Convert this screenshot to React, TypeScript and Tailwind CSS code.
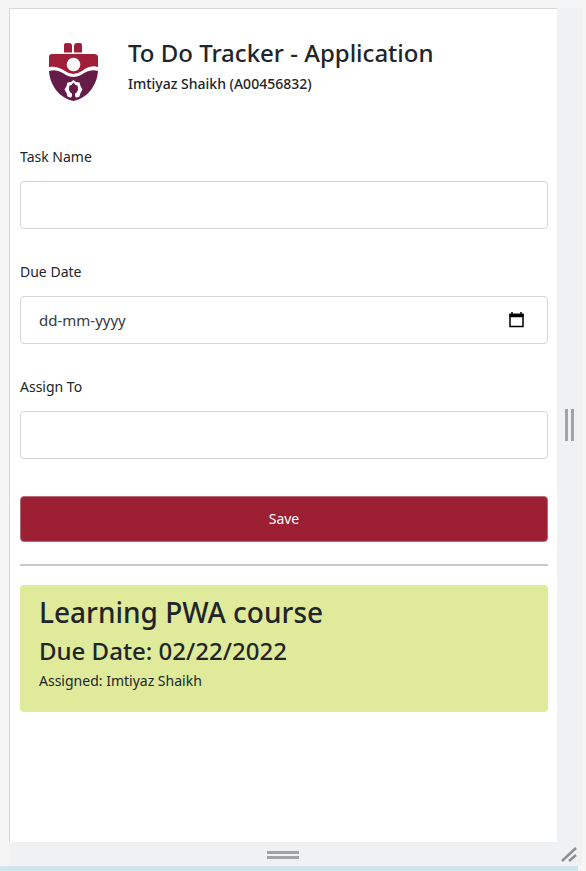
import type { ReactNode } from "react";

function Logo() {
  return (
    <svg viewBox="0 0 52 60" className="h-15 w-13 shrink-0" role="img" aria-label="University crest">
      <path d="M16 10.500V3Q16 1 18 1H21Q24 1 24 4V10.500Z" fill="#a01f38" />
      <path d="M26 10.500V4Q26 1 29 1H32Q34 1 34 3V10.500Z" fill="#a01f38" />
      <path
        d="M4 12H46Q50 12 50 15V25C43 23 38 26 34 29Q25 35 17 29C12 26 8 24 1 25V15Q1 12 4 12Z"
        fill="#a01f38"
      />
      <circle cx="25.500" cy="22.500" r="6.800" fill="#fff" />
      <path
        d="M1 29C9 27 13 30 18 33Q25 37 33 33C38 30 42 27 50 29C49 43 40 56 25.500 59C11 56 2 43 1 29Z"
        fill="#651c49"
      />
      <path
        d="M25.500 38L28 40L31.500 40.500L32.500 44L34.500 47.500L32.500 51L31.500 54.500L27.500 56H23.500L19.500 54.500L18.500 51L16.500 47.500L18.500 44L19.500 40.500L23 40Z"
        fill="#fff"
      />
      <path
        d="M25.500 40.500L27.500 43L29.500 43.500L30 46.500Q30 50 27 51.500V54L29 57H22L24 54V51.500Q21 50 21 46.500L21.500 43.500L23.500 43Z"
        fill="#651c49"
      />
    </svg>
  );
}

function Field({ id, label, children }: { id: string; label: string; children: ReactNode }) {
  return (
    <div className="flex flex-col gap-3">
      <label htmlFor={id} className="text-sm leading-6">
        {label}
      </label>
      {children}
    </div>
  );
}

const inputStyle =
  "block h-12 w-full rounded border border-[#d5d6d8] bg-white px-[18px] text-[15px] text-[#212529] outline-none placeholder:text-[#343a40]";

export default function App() {
  return (
    <div className="flex min-h-screen flex-col bg-[#f5f5f6] pt-2 font-['Noto_Sans','Open_Sans',sans-serif] text-[#212529]">
      <div className="flex grow pr-1 pl-[9px]">
        <main className="grow border-t border-l border-[#d8d8d8] bg-white pr-[9px] pl-[10px]">
          <header className="flex gap-7 pt-7 pl-7">
            <div className="pt-[5px]">
              <Logo />
            </div>
            <div>
              <h1 className="text-2xl leading-8 font-medium">To Do Tracker - Application</h1>
              <h2 className="text-sm leading-[30px] font-medium">Imtiyaz Shaikh (A00456832)</h2>
            </div>
          </header>

          <form className="mt-[43px]" onSubmit={(event) => event.preventDefault()}>
            <div className="flex flex-col gap-[31px]">
              <Field id="task" label="Task Name">
                <input id="task" type="text" className={inputStyle} />
              </Field>
              <Field id="due" label="Due Date">
                <div className="relative">
                  <input id="due" type="text" placeholder="dd-mm-yyyy" className={inputStyle} />
                  <button
                    type="button"
                    aria-label="Choose date"
                    className="absolute inset-y-0 right-[22px] flex items-center"
                  >
                    <svg viewBox="0 0 18 18" className="size-[18px]" fill="none" stroke="#000">
                      <path d="M2 3.500H15V15.500H2Z" strokeWidth="1.500" />
                      <path d="M1.500 4.500H15.500" strokeWidth="3.500" />
                      <path d="M4 1V4M13 1V4" strokeWidth="1.500" />
                    </svg>
                  </button>
                </div>
              </Field>
              <Field id="assignee" label="Assign To">
                <input id="assignee" type="text" className={inputStyle} />
              </Field>
            </div>
            <button
              type="submit"
              className="mt-[37px] h-[46px] w-full rounded border border-[#b5697a] bg-[#9d1f34] text-sm text-white"
            >
              Save
            </button>
          </form>

          <hr className="mt-[22px] mb-[19px] border-t-2 border-[#c9cacb]" />

          <article className="rounded bg-[#e0ea9b] px-[19px] pt-[7px] pb-5">
            <h2 className="text-[28px] leading-10 font-medium">Learning PWA course</h2>
            <h3 className="text-2xl leading-[38px] font-medium">Due Date: 02/22/2022</h3>
            <p className="text-sm leading-[22px]">Assigned: Imtiyaz Shaikh</p>
          </article>
        </main>
        <div className="flex w-[25px] shrink-0 items-center justify-center gap-[3px] bg-[#f0f1f3]">
          <span className="h-8 w-[3px] bg-[#a3a3a3]" />
          <span className="h-8 w-[3px] bg-[#a3a3a3]" />
        </div>
      </div>
      <footer className="mr-1 ml-[9px] flex h-6 items-center bg-[#f0f1f3]">
        <div className="flex grow flex-col items-center gap-[2px] pt-[2px]">
          <span className="h-[3px] w-8 bg-[#a3a3a3]" />
          <span className="h-[3px] w-8 bg-[#a3a3a3]" />
        </div>
        <svg viewBox="0 0 25 24" className="h-6 w-[25px]" stroke="#8f8f8f" strokeWidth="2.500" fill="none">
          <path d="M5 19L19 6M12 19L19 13" />
        </svg>
      </footer>
      <div className="mr-2 h-[5px] bg-[#cfe6ee]" />
    </div>
  );
}
